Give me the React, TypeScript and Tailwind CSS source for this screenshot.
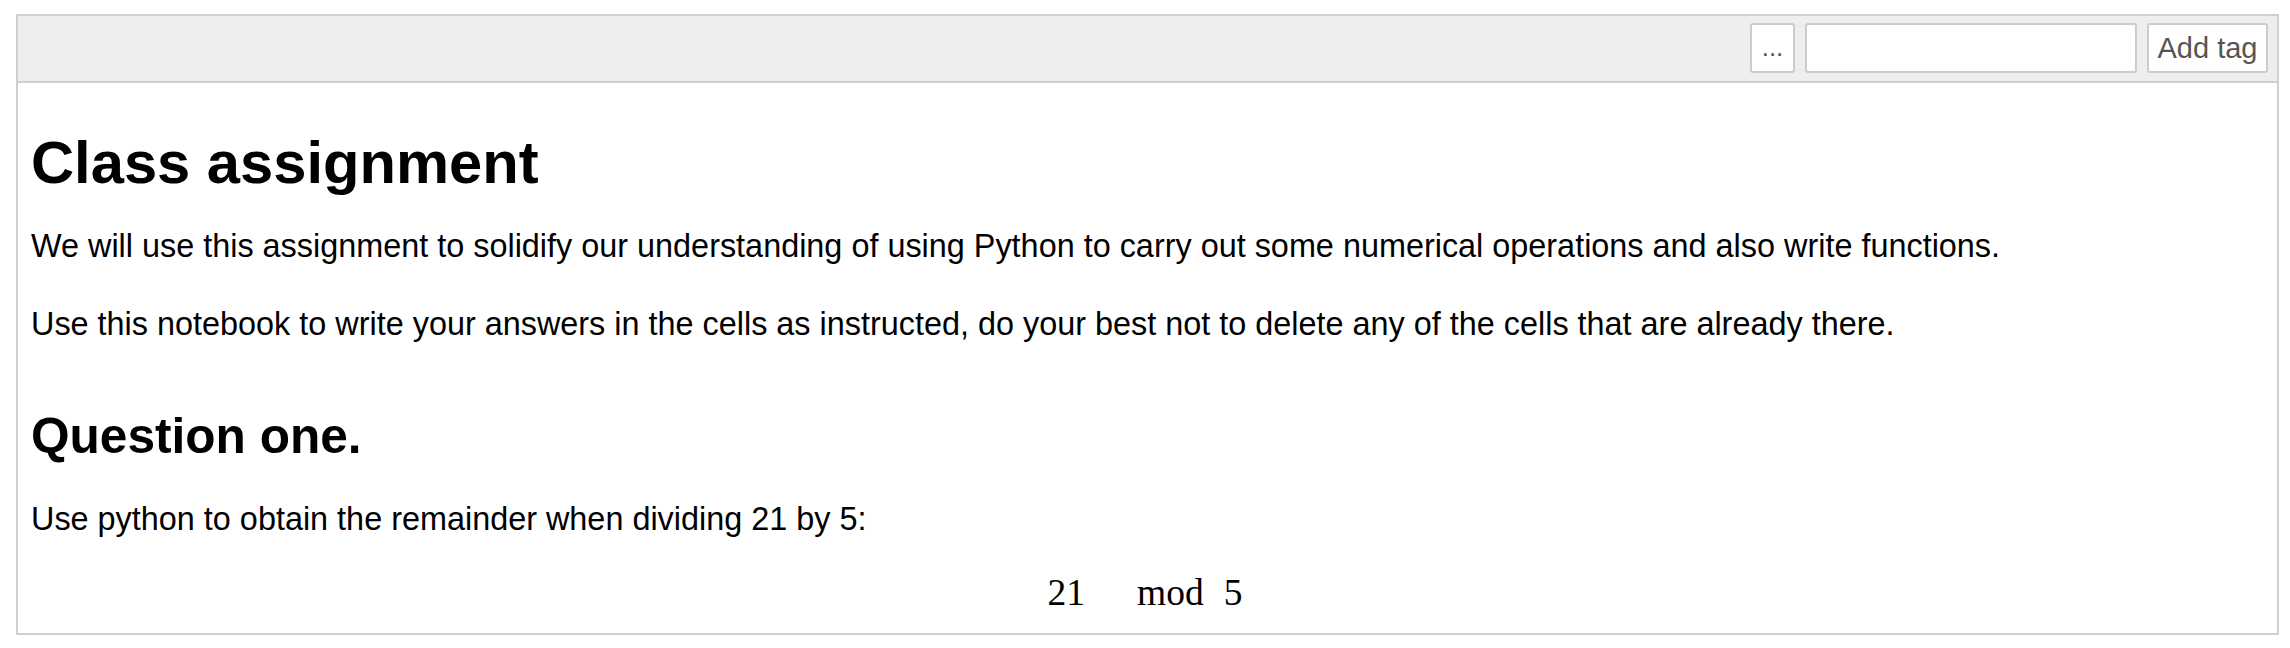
import { useState } from "react"

const sans = "font-['Liberation_Sans',Arial,sans-serif]"

function CellToolbar() {
  const [tag, setTag] = useState("")

  return (
    <div className="flex h-[67px] shrink-0 items-start justify-end gap-[10px] border-b-2 border-[#cfcfcf] bg-[#eeeeee] pr-[9px] pt-[7px]">
      <button
        type="button"
        className="flex h-[50px] w-[45px] items-end justify-center rounded-[3px] border-2 border-[#cccccc] bg-white pb-[11px] text-[26px] leading-none text-[#555555]"
      >
        ...
      </button>
      <input
        value={tag}
        onChange={(e) => setTag(e.target.value)}
        className="h-[50px] w-[332px] rounded-[3px] border-2 border-[#cccccc] bg-white px-2 text-[28px] outline-none"
      />
      <button
        type="button"
        className="h-[50px] w-[121px] rounded-[3px] border-2 border-[#cccccc] bg-white text-[29px] leading-none text-[#555555]"
      >
        Add tag
      </button>
    </div>
  )
}

function MarkdownCell() {
  return (
    <div className="pl-[13px] text-black">
      <h1 className="mt-[47px] text-[59.7px] font-bold leading-[65px]">
        Class assignment
      </h1>
      <p className="mt-[28px] text-[32.4px] leading-[46px]">
        We will use this assignment to solidify our understanding of using
        Python to carry out some numerical operations and also write functions.
      </p>
      <p className="mt-[32px] text-[32.4px] leading-[46px]">
        Use this notebook to write your answers in the cells as instructed, do
        your best not to delete any of the cells that are already there.
      </p>
      <h2 className="mt-[62px] text-[49.6px] font-bold leading-[55px]">
        Question one.
      </h2>
      <p className="mt-[32px] text-[32.4px] leading-[46px]">
        Use python to obtain the remainder when dividing 21 by 5:
      </p>
      <div className="mr-[18px] mt-[29px] flex justify-center font-['Liberation_Serif','Times_New_Roman',serif] text-[37.5px] leading-[44px]">
        <span>21</span>
        <span className="ml-[52px]">mod</span>
        <span className="ml-[20px]">5</span>
      </div>
    </div>
  )
}

export default function App() {
  return (
    <div className={`h-[648px] w-[2290px] bg-white pl-[16px] pt-[14px] ${sans}`}>
      <div className="flex h-[621px] w-[2263px] flex-col overflow-hidden border-2 border-[#cfcfcf] bg-white">
        <CellToolbar />
        <MarkdownCell />
      </div>
    </div>
  )
}
